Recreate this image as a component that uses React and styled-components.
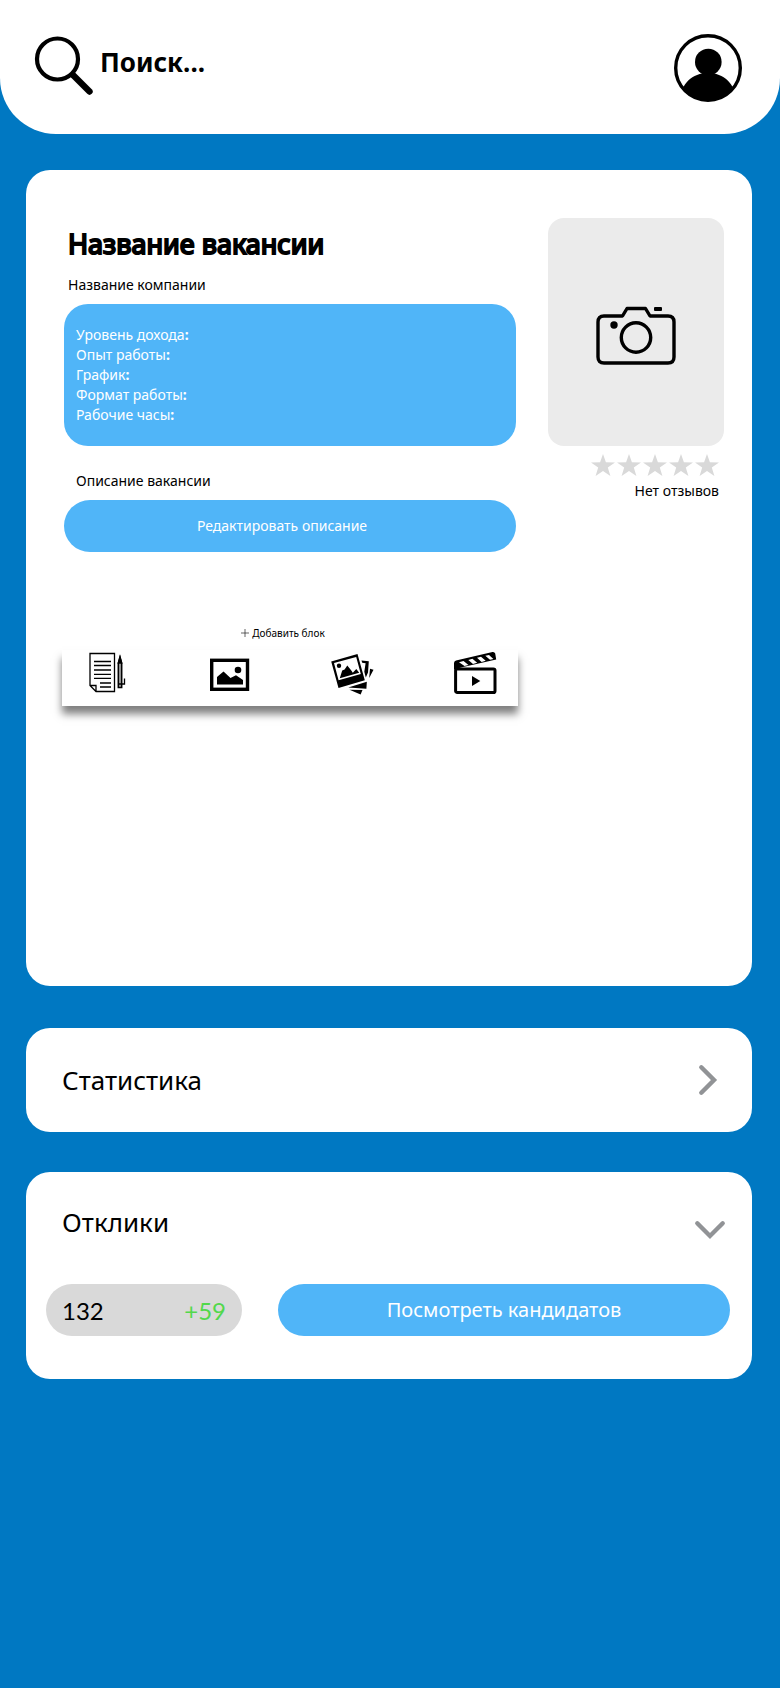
import React from "react";
import styled, { createGlobalStyle } from "styled-components";

const GlobalStyle = createGlobalStyle`
  *, *::before, *::after { box-sizing: border-box; }
  body {
    margin: 0;
    background: #0078c2;
    color: #000;
    font-family: "Noto Sans", "Open Sans", sans-serif;
  }
  button, input { font: inherit; color: inherit; }
  h1, h2, p, ul { margin: 0; padding: 0; font-weight: 400; }
  svg { display: block; }
`;

const Page = styled.div`
  min-height: 100vh;
  background: #0078c2;
`;

const Header = styled.header`
  display: flex;
  justify-content: space-between;
  align-items: flex-start;
  gap: 24px;
  padding: 34px 38px 32px 34px;
  background: #fff;
  border-radius: 0 0 56px 56px;
`;

const SearchField = styled.label`
  flex: 1;
  display: flex;
  gap: 5px;
`;

const SearchInput = styled.input`
  flex: 1;
  min-width: 0;
  height: 56px;
  padding: 0;
  border: 0;
  outline: 0;
  background: transparent;
  font-size: 26px;
  font-weight: 700;
  &::placeholder { color: #000; opacity: 1; }
`;

const IconButton = styled.button`
  display: flex;
  align-items: center;
  justify-content: center;
  width: ${(p) => p.$size}px;
  height: ${(p) => p.$size}px;
  padding: 0;
  border: 0;
  background: transparent;
  cursor: pointer;
`;

const Main = styled.main`
  display: flex;
  flex-direction: column;
  padding: 36px 28px 36px 26px;
`;

const Card = styled.section`
  background: #fff;
  border-radius: 24px;
`;

const VacancyCard = styled(Card)`
  display: grid;
  grid-template-columns: minmax(0, 1fr) 176px;
  column-gap: 32px;
  align-items: start;
  min-height: 816px;
  padding: 48px 28px 48px 38px;
`;

const Title = styled.h1`
  padding: 8px 4px 0;
  font-size: 27px;
  line-height: 36px;
  -webkit-text-stroke: 2px #000;
`;

const Caption = styled.p`
  margin: ${(p) => p.$top}px 0 9px;
  padding-left: ${(p) => p.$indent}px;
  font-size: 14px;
  line-height: 20px;
`;

const Conditions = styled.ul`
  padding: 21px 12px;
  border-radius: 24px;
  background: #50b5f8;
  color: #fff;
  font-size: 14px;
  line-height: 20px;
  list-style: none;
`;

const Colon = styled.span`
  font-weight: 700;
`;

const PillButton = styled.button`
  width: 100%;
  height: 52px;
  padding: 0 ${(p) => p.$trail}px 2px 0;
  border: 0;
  border-radius: 26px;
  background: #50b5f8;
  color: #fff;
  font-size: ${(p) => p.$text}px;
  cursor: pointer;
`;

const AddLabel = styled.p`
  display: flex;
  justify-content: center;
  align-items: center;
  gap: 3px;
  margin-top: 73px;
  padding-right: 14px;
  font-size: 10px;
  line-height: 16px;
`;

const BlockBar = styled.div`
  display: flex;
  justify-content: space-between;
  margin: 9px -2px 0;
  padding: 1px 21px 11px 23px;
  background: #fff;
  box-shadow: 0 8px 8px rgba(0, 0, 0, 0.5);
`;

const PhotoButton = styled.button`
  display: flex;
  align-items: center;
  justify-content: center;
  width: 100%;
  height: 228px;
  padding: 8px 0 0;
  border: 0;
  border-radius: 16px;
  background: #ebebeb;
  cursor: pointer;
`;

const Rating = styled.div`
  display: flex;
  flex-direction: column;
  align-items: flex-end;
  padding: 8px 5px 0 0;
  font-size: 14px;
  line-height: 20px;
`;

const Stars = styled.div`
  display: flex;
  gap: 2px;
  margin-bottom: 4px;
`;

const StatsCard = styled(Card)`
  display: flex;
  align-items: center;
  justify-content: space-between;
  margin-top: 42px;
  padding: 28px 20px 28px 36px;
`;

const RepliesCard = styled(Card)`
  margin-top: 40px;
  padding: 26px 18px 43px 20px;
`;

const RepliesHead = styled.div`
  display: flex;
  justify-content: space-between;
  align-items: flex-start;
  padding-left: 16px;
`;

const SectionTitle = styled.h2`
  font-size: 26px;
  line-height: 48px;
`;

const RepliesRow = styled.div`
  display: grid;
  grid-template-columns: 196px minmax(0, 1fr);
  gap: 36px;
  margin-top: 38px;
  padding-right: 4px;
`;

const Counter = styled.div`
  display: flex;
  justify-content: space-between;
  align-items: center;
  height: 52px;
  padding: 0 16px;
  border-radius: 26px;
  background: #d9d9d9;
  font-family: Lato, sans-serif;
  font-size: 24px;
`;

const Growth = styled.span`
  color: #52d84c;
`;

const SearchIcon = () => (
  <svg width="61" height="64" viewBox="0 0 61 64" fill="none" stroke="#000" aria-hidden="true">
    <circle cx="23.5" cy="25" r="20.5" strokeWidth="4.2" />
    <path d="M39 41 L55.5 57.5" strokeWidth="6.4" strokeLinecap="round" />
  </svg>
);

const ProfileIcon = () => (
  <svg width="68" height="68" viewBox="0 0 68 68" aria-hidden="true">
    <clipPath id="profile-ring"><circle cx="34" cy="34" r="33" /></clipPath>
    <circle cx="34" cy="34" r="32.3" fill="none" stroke="#000" strokeWidth="3.4" />
    <circle cx="34.3" cy="28" r="13.3" />
    <path clipPath="url(#profile-ring)" d="M6 68 C6 50 18 39 34 39 C50 39 62 50 62 68 Z" />
  </svg>
);

const CameraIcon = () => (
  <svg width="80" height="60" viewBox="0 0 80 60" fill="none" stroke="#000" strokeWidth="3.4" aria-hidden="true">
    <path d="M8 10 H26.5 L31 2.5 H49.5 L54 10 H72 Q78 10 78 16 V51 Q78 57 72 57 H8 Q2 57 2 51 V16 Q2 10 8 10 Z" strokeLinejoin="round" />
    <circle cx="40" cy="31.5" r="14.7" />
    <circle cx="18" cy="19" r="3.7" fill="#000" stroke="none" />
    <rect x="58" y="1" width="8" height="4" rx="1" fill="#000" stroke="none" />
  </svg>
);

const StarIcon = () => (
  <svg width="24" height="23" viewBox="0 0 24 23" fill="#d9d9d9" aria-hidden="true">
    <path d="M12 0 L14.9 8.3 L24 8.4 L16.8 13.6 L19.4 22 L12 17 L4.6 22 L7.2 13.6 L0 8.4 L9.1 8.3 Z" />
  </svg>
);

const PlusIcon = () => (
  <svg width="8" height="8" viewBox="0 0 8 8" stroke="#222" strokeWidth="0.7" aria-hidden="true">
    <path d="M4 0 V8 M0 4 H8" />
  </svg>
);

const TextIcon = () => (
  <svg width="44" height="44" viewBox="0 0 44 44" fill="none" stroke="#000" strokeWidth="1.3" aria-hidden="true">
    <path d="M5 2.5 H29.5 V40.5 H11 L5 34.5 Z M5 34.5 H11 V40.5" />
    <path d="M9 10.5 H26 M9 14.5 H26 M9 19 H26 M9 23.3 H26 M9 27.3 H26 M15 32 H26 M15 36 H26" />
    <path d="M33.3 12 L35 6 L36.7 12 V36.5 H33.3 Z" fill="#999" strokeWidth="1.5" />
    <path d="M35 6 L33.3 12 H36.7 Z" fill="#000" />
    <path d="M33 33 H39.5 V27.5" />
  </svg>
);

const ImageIcon = () => (
  <svg width="44" height="44" viewBox="0 0 44 44" aria-hidden="true">
    <rect x="3.7" y="9.3" width="35.8" height="29" fill="none" stroke="#000" strokeWidth="3.4" />
    <circle cx="30" cy="19" r="3.3" />
    <path d="M9 33.5 V26 L15.5 20.5 L22.5 27 L28 24.2 L35 29 V33.5 Z" />
  </svg>
);

const GalleryIcon = () => (
  <svg width="44" height="44" viewBox="0 0 44 44" aria-hidden="true">
    <path fillRule="evenodd" d="M1.2 10.5 L27.5 3 L34.8 29.3 L8.5 37 Z M4 12 L8.6 29.2 L30.8 23 L26.2 6 Z" />
    <path d="M9.8 27.2 L12.2 19.6 L14.6 18.6 L17.3 14.5 L21.3 19.5 L22.8 21.8 L26.3 18 L29.2 21.7 Z" />
    <circle cx="9" cy="14.8" r="2.2" />
    <path d="M31.5 9.5 L38.8 10.3 L38 21.5 L35.8 26.5 L34.3 20.8 L35.6 12.2 L32.2 11.8 Z" />
    <path d="M40 17.8 L43.5 18.8 L39.2 27 Z" />
    <path d="M18.3 36.5 L36.8 30.8 L36.4 37.7 Z" />
    <path d="M19.5 38.7 L32.5 39 L30.6 43.5 Z" />
  </svg>
);

const VideoIcon = () => (
  <svg width="44" height="44" viewBox="0 0 44 44" aria-hidden="true">
    <rect x="2.6" y="18" width="39.4" height="23.5" rx="1.6" fill="none" stroke="#000" strokeWidth="3" />
    <path d="M1 18.5 V12 Q1 10 3 9.4 L39.5 1 Q41.6 .7 42.2 2.6 L43.2 8.6 L9 16.3 Z" />
    <path fill="#fff" d="M6 11.2 L10.5 10 L15.5 14 L11.5 15 Z M15.3 8.9 L19.4 7.8 L24.2 11.8 L20 12.9 Z M24 6.8 L28 5.8 L32.7 9.8 L28.6 10.9 Z M32.3 4.8 L36 3.9 L40.4 8 L37 8.8 Z" />
    <path d="M19 25 L27.3 30 L19 35 Z" />
  </svg>
);

const Chevron = ({ down }) => (
  <svg width="48" height="48" viewBox="0 0 48 48" fill="none" stroke="#919396" strokeWidth="4.4" strokeLinecap="round" aria-hidden="true">
    <path d={down ? "M11.3 25.3 L24 38 L36.7 25.3" : "M17.3 11.3 L30 24 L17.3 36.7"} />
  </svg>
);

const conditions = ["Уровень дохода", "Опыт работы", "График", "Формат работы", "Рабочие часы"];

const blocks = [
  ["Текст", TextIcon],
  ["Изображение", ImageIcon],
  ["Галерея", GalleryIcon],
  ["Видео", VideoIcon],
];

export default function App() {
  return (
    <Page>
      <GlobalStyle />
      <Header>
        <SearchField>
          <SearchIcon />
          <SearchInput type="search" placeholder="Поиск..." aria-label="Поиск" />
        </SearchField>
        <IconButton $size={68} aria-label="Профиль">
          <ProfileIcon />
        </IconButton>
      </Header>
      <Main>
        <VacancyCard>
          <div>
            <Title>Название вакансии</Title>
            <Caption $top={13} $indent={4}>Название компании</Caption>
            <Conditions>
              {conditions.map((name) => (
                <li key={name}>{name}<Colon>:</Colon></li>
              ))}
            </Conditions>
            <Caption $top={25} $indent={12}>Описание вакансии</Caption>
            <PillButton $text={14} $trail={16}>Редактировать описание</PillButton>
            <AddLabel><PlusIcon />Добавить блок</AddLabel>
            <BlockBar>
              {blocks.map(([name, Icon]) => (
                <IconButton key={name} $size={44} aria-label={name}>
                  <Icon />
                </IconButton>
              ))}
            </BlockBar>
          </div>
          <div>
            <PhotoButton aria-label="Добавить фото">
              <CameraIcon />
            </PhotoButton>
            <Rating>
              <Stars>
                {[1, 2, 3, 4, 5].map((n) => <StarIcon key={n} />)}
              </Stars>
              <p>Нет отзывов</p>
            </Rating>
          </div>
        </VacancyCard>
        <StatsCard>
          <SectionTitle>Статистика</SectionTitle>
          <IconButton $size={48} aria-label="Открыть статистику">
            <Chevron />
          </IconButton>
        </StatsCard>
        <RepliesCard>
          <RepliesHead>
            <SectionTitle>Отклики</SectionTitle>
            <IconButton $size={48} aria-label="Свернуть отклики">
              <Chevron down />
            </IconButton>
          </RepliesHead>
          <RepliesRow>
            <Counter>
              <span>132</span>
              <Growth>+59</Growth>
            </Counter>
            <PillButton $text={20} $trail={0}>Посмотреть кандидатов</PillButton>
          </RepliesRow>
        </RepliesCard>
      </Main>
    </Page>
  );
}
